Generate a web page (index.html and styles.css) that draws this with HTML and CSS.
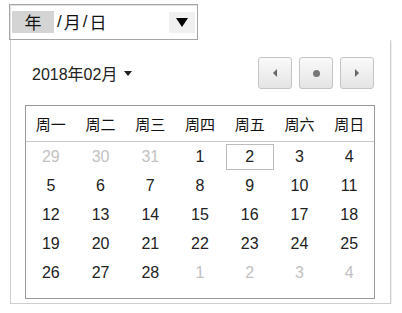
FILE: index.html
```html
<!DOCTYPE html>
<html>
<head>
	<title>Date picker</title>
	<link rel="stylesheet" href="styles.css">
</head>
<body>
	<div class="date-input">
		<span class="seg seg-active">年</span>
		<span class="sep">/</span>
		<span class="seg">月</span>
		<span class="sep">/</span>
		<span class="seg">日</span>
		<span class="drop-btn"><span class="drop-tri"></span></span>
	</div>

	<div class="popup">
		<div class="popup-head">
			<div class="month-label">2018年02月 <span class="month-tri"></span></div>
			<div class="nav">
				<button class="nav-btn"><span class="tri-left"></span></button>
				<button class="nav-btn"><span class="dot"></span></button>
				<button class="nav-btn"><span class="tri-right"></span></button>
			</div>
		</div>

		<div class="cal">
			<div class="cal-head">
				<span>周一</span><span>周二</span><span>周三</span><span>周四</span><span>周五</span><span>周六</span><span>周日</span>
			</div>
			<div class="cal-body">
				<span class="other">29</span><span class="other">30</span><span class="other">31</span><span>1</span><span class="today"><i>2</i></span><span>3</span><span>4</span>
				<span>5</span><span>6</span><span>7</span><span>8</span><span>9</span><span>10</span><span>11</span>
				<span>12</span><span>13</span><span>14</span><span>15</span><span>16</span><span>17</span><span>18</span>
				<span>19</span><span>20</span><span>21</span><span>22</span><span>23</span><span>24</span><span>25</span>
				<span>26</span><span>27</span><span>28</span><span class="other">1</span><span class="other">2</span><span class="other">3</span><span class="other">4</span>
			</div>
		</div>
	</div>
</body>
</html>
```

FILE: styles.css
```css
/* page */
body {
  margin: 0;
  padding: 4px 0 0 9px;
  background: #fff;
  font-family: "Liberation Sans", "Noto Sans CJK SC", sans-serif;
  color: #222;
}

/* date input */
.date-input {
  width: 183px;
  height: 34px;
  border: 1px solid #a6a6a6;
  box-shadow: inset 1px 1px 0 #e2e2e2;
  display: flex;
  align-items: center;
  padding: 0 2px 0 2px;
  font-family: "Noto Sans CJK SC", sans-serif;
  font-size: 17px;
  color: #111;
}

.seg {
  line-height: 22px;
}

.seg-active {
  width: 42px;
  text-align: center;
  background: #d4d4d4;
  margin-right: 1px;
}

.sep {
  font-family: "Liberation Sans", sans-serif;
  margin: 0 2px;
}

.drop-btn {
  margin-left: auto;
  width: 26px;
  height: 21px;
  background: #f0f0f0;
  display: flex;
  align-items: center;
  justify-content: center;
}

.drop-tri {
  width: 0;
  height: 0;
  border-left: 6px solid transparent;
  border-right: 6px solid transparent;
  border-top: 9px solid #000;
}

/* popup */
.popup {
  width: 350px;
  margin-left: 1px;
  border: 1px solid #cfcfcf;
  border-top: none;
  padding: 17px 15px 4px 14px;
  box-shadow: 1px 1px 0 #eee;
}

.popup-head {
  display: flex;
  align-items: center;
  justify-content: space-between;
  height: 32px;
  margin-bottom: 16px;
}

.month-label {
  margin-left: 7px;
  font-size: 16px;
  color: #222;
  display: flex;
  align-items: center;
  gap: 7px;
}

.month-tri {
  width: 0;
  height: 0;
  border-left: 4px solid transparent;
  border-right: 4px solid transparent;
  border-top: 5px solid #222;
}

.nav {
  display: flex;
  gap: 7px;
  margin-right: 1px;
}

.nav-btn {
  width: 34px;
  height: 32px;
  border: 1px solid #c4c4c4;
  border-radius: 3px;
  background: linear-gradient(#fafafa, #e4e4e4);
  display: flex;
  align-items: center;
  justify-content: center;
  padding: 0;
}

.tri-left {
  border-top: 4px solid transparent;
  border-bottom: 4px solid transparent;
  border-right: 4px solid #666;
}

.tri-right {
  border-top: 4px solid transparent;
  border-bottom: 4px solid transparent;
  border-left: 4px solid #666;
}

.dot {
  width: 7px;
  height: 7px;
  border-radius: 50%;
  background: #777;
}

/* calendar grid */
.cal {
  border: 1px solid #9a9a9a;
}

.cal-head,
.cal-body {
  display: grid;
  grid-template-columns: repeat(7, 1fr);
}

.cal-head {
  height: 35px;
  border-bottom: 1px solid #c8c8c8;
  align-items: center;
  text-align: center;
  font-family: "Noto Sans CJK SC", sans-serif;
  font-size: 15px;
  color: #111;
}

.cal-body {
  padding: 0 0 11px;
  grid-auto-rows: 29px;
  font-size: 16px;
  color: #222;
}

.cal-body span {
  display: flex;
  align-items: center;
  justify-content: center;
}

.cal-body .other {
  color: #c2c2c2;
}

.cal-body .today i {
  font-style: normal;
  width: 46px;
  height: 24px;
  border: 1px solid #bcbcbc;
  display: flex;
  align-items: center;
  justify-content: center;
}
```
